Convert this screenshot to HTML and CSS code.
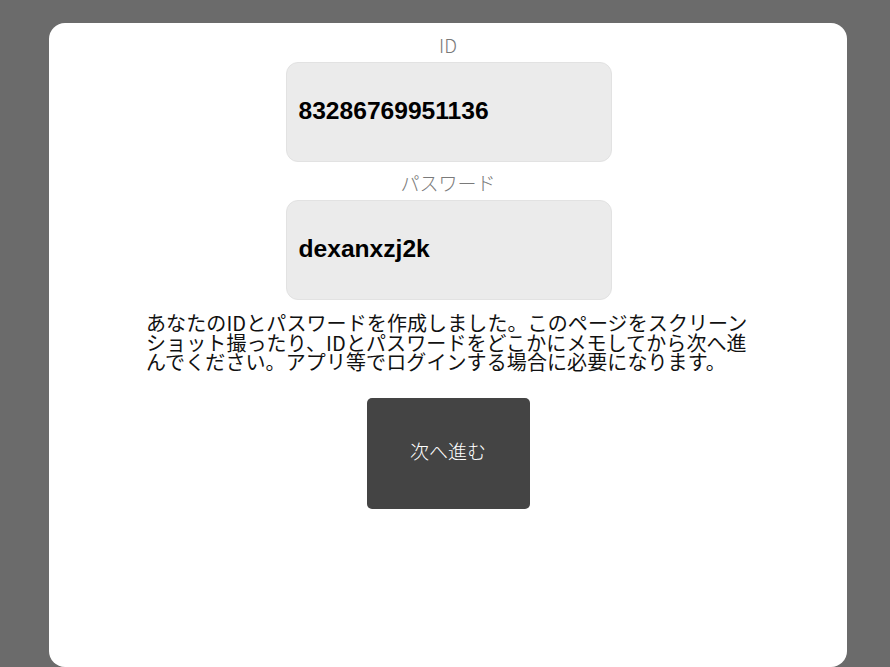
FILE: index.html
```html
<!DOCTYPE html>
<html lang="ja">
<head>
<meta charset="utf-8">
<link rel="stylesheet" href="styles.css">
</head>
<body>
<div class="card">
  <div class="field">
    <div class="label">ID</div>
    <div class="box">83286769951136</div>
  </div>
  <div class="field">
    <div class="label">パスワード</div>
    <div class="box">dexanxzj2k</div>
  </div>
  <p class="note">あなたのIDとパスワードを作成しました。このページをスクリーンショット撮ったり、IDとパスワードをどこかにメモしてから次へ進んでください。アプリ等でログインする場合に必要になります。</p>
  <button class="next">次へ進む</button>
</div>
</body>
</html>
```
FILE: styles.css
```css
html, body {
  margin: 0;
  padding: 0;
  height: 100%;
}
body {
  background: #6b6b6b;
  font-family: "Noto Sans CJK JP", "Noto Sans", sans-serif;
  padding: 23px 0 0 49px;
  box-sizing: border-box;
  overflow: hidden;
}
.card {
  width: 798px;
  height: 644px;
  background: #fff;
  border-radius: 16px;
  padding-top: 8px;
  box-sizing: border-box;
  display: flex;
  flex-direction: column;
  align-items: center;
}
.field {
  display: flex;
  flex-direction: column;
  align-items: center;
}
.field + .field {
  margin-top: 7px;
}
.label {
  font-size: 19px;
  line-height: 28px;
  font-weight: 300;
  color: #7a7a7a;
  margin-bottom: 3px;
}
.box {
  width: 326px;
  height: 100px;
  margin-left: 1px;
  box-sizing: border-box;
  background: #ebebeb;
  border: 1px solid #e2e2e2;
  border-radius: 12px;
  display: flex;
  align-items: center;
  padding: 0 0 3px 12px;
  font-family: "Liberation Sans", Arial, sans-serif;
  font-weight: bold;
  font-size: 24.6px;
  color: #000;
}
.note {
  width: 604px;
  margin: 13px 0 0 0;
  font-size: 20px;
  line-height: 19.5px;
  color: #111;
  font-weight: 400;
  letter-spacing: 0.1px;
}
.next {
  margin-top: 26px;
  width: 163px;
  height: 111px;
  padding: 0 0 5px 0;
  background: #444;
  color: #fff;
  border: none;
  border-radius: 5px;
  font-family: "Noto Sans CJK JP", sans-serif;
  font-size: 19px;
  font-weight: 300;
}
```
